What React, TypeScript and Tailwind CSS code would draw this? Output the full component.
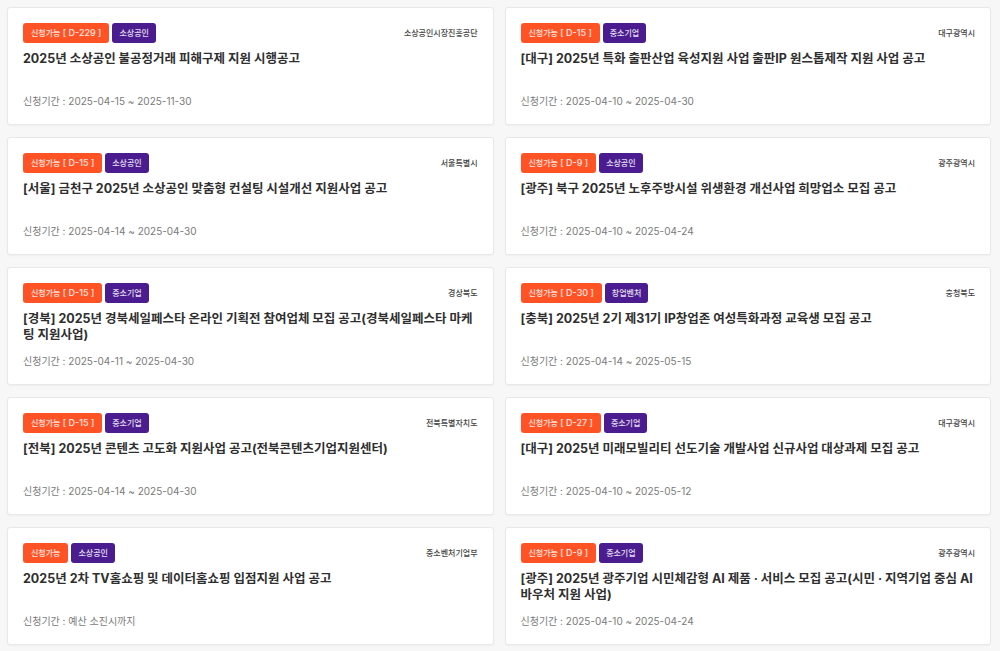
const items = [
  { dday: "D-229", cat: "소상공인", org: "소상공인시장진흥공단", title: "2025년 소상공인 불공정거래 피해구제 지원 시행공고", period: "신청기간 : 2025-04-15 ~ 2025-11-30" },
  { dday: "D-15", cat: "중소기업", org: "대구광역시", title: "[대구] 2025년 특화 출판산업 육성지원 사업 출판IP 원스톱제작 지원 사업 공고", period: "신청기간 : 2025-04-10 ~ 2025-04-30" },
  { dday: "D-15", cat: "소상공인", org: "서울특별시", title: "[서울] 금천구 2025년 소상공인 맞춤형 컨설팅 시설개선 지원사업 공고", period: "신청기간 : 2025-04-14 ~ 2025-04-30" },
  { dday: "D-9", cat: "소상공인", org: "광주광역시", title: "[광주] 북구 2025년 노후주방시설 위생환경 개선사업 희망업소 모집 공고", period: "신청기간 : 2025-04-10 ~ 2025-04-24" },
  { dday: "D-15", cat: "중소기업", org: "경상북도", title: "[경북] 2025년 경북세일페스타 온라인 기획전 참여업체 모집 공고(경북세일페스타 마케팅 지원사업)", period: "신청기간 : 2025-04-11 ~ 2025-04-30" },
  { dday: "D-30", cat: "창업벤처", org: "충청북도", title: "[충북] 2025년 2기 제31기 IP창업존 여성특화과정 교육생 모집 공고", period: "신청기간 : 2025-04-14 ~ 2025-05-15" },
  { dday: "D-15", cat: "중소기업", org: "전북특별자치도", title: "[전북] 2025년 콘텐츠 고도화 지원사업 공고(전북콘텐츠기업지원센터)", period: "신청기간 : 2025-04-14 ~ 2025-04-30" },
  { dday: "D-27", cat: "중소기업", org: "대구광역시", title: "[대구] 2025년 미래모빌리티 선도기술 개발사업 신규사업 대상과제 모집 공고", period: "신청기간 : 2025-04-10 ~ 2025-05-12" },
  { dday: "", cat: "소상공인", org: "중소벤처기업부", title: "2025년 2차 TV홈쇼핑 및 데이터홈쇼핑 입점지원 사업 공고", period: "신청기간 : 예산 소진시까지" },
  { dday: "D-9", cat: "중소기업", org: "광주광역시", title: "[광주] 2025년 광주기업 시민체감형 AI 제품 · 서비스 모집 공고(시민 · 지역기업 중심 AI 바우처 지원 사업)", period: "신청기간 : 2025-04-10 ~ 2025-04-24" },
];

export default function App() {
  return (
    <div
      className="min-h-screen bg-[#f7f7f8] pl-[7px] pr-[9px] pt-[7px]"
      style={{ fontFamily: 'Inter, "Noto Sans CJK KR", sans-serif' }}
    >
      <div className="grid grid-cols-2 gap-x-[11px] gap-y-[12px]">
        {items.map((item) => (
          <article
            key={item.title}
            className="rounded-[3px] border border-[#e8e8ea] bg-white px-[15px] pb-[15px] pt-[15px] shadow-[0_1px_2px_rgba(0,0,0,0.04)]"
          >
            <div className="flex items-center justify-between">
              <div className="flex items-center gap-[3px]">
                <span className="flex h-[20px] items-center whitespace-pre rounded-[3px] bg-[#ff5326] px-[8px] text-[8px] font-medium text-white/85">
                  신청가능
                  {item.dday && <span className="text-[9px]">{` [ ${item.dday} ]`}</span>}
                </span>
                <span className="flex h-[20px] items-center rounded-[3px] bg-[#4b1c8f] px-[7px] text-[8px] font-medium text-white/85">
                  {item.cat}
                </span>
              </div>
              <span className="text-[8px] font-medium text-[#444]">{item.org}</span>
            </div>
            <p className="mt-[8px] min-h-[32px] break-all text-[12.5px] font-bold leading-[16px] text-[#2f2f2f]">
              {item.title}
            </p>
            <p className="mt-[10px] text-[10px] leading-[16px] text-[#7a7a7a]">{item.period}</p>
          </article>
        ))}
      </div>
    </div>
  );
}
